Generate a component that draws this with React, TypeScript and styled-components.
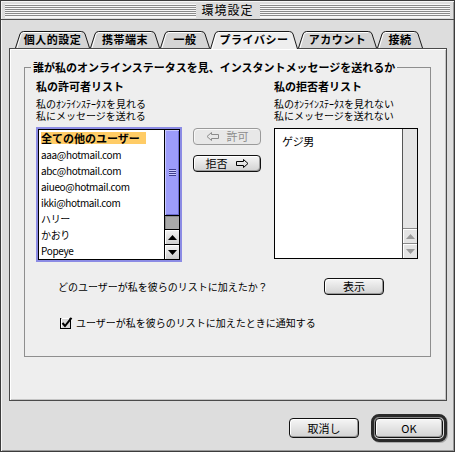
import React from 'react';
import styled, { createGlobalStyle } from 'styled-components';

const GlobalStyle = createGlobalStyle`
  html, body {
    margin: 0;
    padding: 0;
    background: #dddddd;
  }
  body {
    font-family: "Noto Sans CJK JP", "Noto Sans", sans-serif;
  }
`;

const Window = styled.div`
  width: 455px;
  height: 452px;
  box-sizing: border-box;
  border: 1px solid #3c3c3c;
  background: #dddddd;
  display: flex;
  flex-direction: column;
  color: #000;
  font-family: "Noto Sans CJK JP", "Noto Sans", sans-serif;
  box-shadow: inset 1px 1px 0 #f6f6f6, inset -1px -1px 0 #9a9a9a;
`;

const TitleBar = styled.div`
  flex: none;
  height: 19px;
  box-sizing: border-box;
  border-bottom: 1px solid #505050;
  display: flex;
  align-items: center;
  gap: 4px;
  padding: 0 4px 0 4px;
`;

const Stripes = styled.div`
  flex: 1;
  height: 13px;
  background: repeating-linear-gradient(to bottom, #f8f8f8 0 1px, #8a8a8a 1px 2px);
  box-shadow: 0 1px 0 #f8f8f8;
`;

const Title = styled.div`
  font-size: 12px;
  line-height: 18px;
  letter-spacing: 1px;
  padding: 0 2px;
`;

const Body = styled.div`
  flex: 1;
  display: flex;
  flex-direction: column;
  padding: 11px 0 0 8px;
`;

const TabRow = styled.div`
  position: relative;
  z-index: 1;
  display: flex;
  align-items: flex-start;
  height: 17px;
  padding-left: 6px;
`;

const TabBox = styled.div<{ $w: number; $h: number }>`
  position: relative;
  flex: none;
  width: ${(p) => p.$w}px;
  height: ${(p) => p.$h}px;
  display: flex;
  justify-content: center;
  svg {
    position: absolute;
    top: 0;
    left: 0;
  }
`;

const TabLabel = styled.span`
  position: relative;
  font-size: 11px;
  font-weight: bold;
  line-height: 17px;
  letter-spacing: 0.5px;
`;

const Panel = styled.div`
  width: 438px;
  height: 353px;
  box-sizing: border-box;
  border: 1px solid #4a4a4a;
  background: #eeeeee;
  box-shadow: inset 1px 1px 0 #ffffff, inset -1px -1px 0 #c4c4c4;
  padding: 11px 0 0 14px;
`;

const Group = styled.fieldset`
  margin: 0;
  padding: 0;
  min-width: 0;
  width: 407px;
  height: 297px;
  box-sizing: border-box;
  border: 1px solid #8e8e8e;
`;

const GroupLabel = styled.legend`
  margin-left: 6px;
  padding: 0 2px;
  font-size: 11px;
  font-weight: bold;
  line-height: 14px;
`;

const Columns = styled.div`
  display: grid;
  grid-template-columns: 157px 81px 144px;
  padding: 5px 0 0 11px;
`;

const ListHead = styled.div`
  display: flex;
  flex-direction: column;
`;

const Heading = styled.div`
  font-size: 11px;
  font-weight: bold;
  line-height: 14px;
`;

const Note = styled.div`
  margin-top: 5px;
  font-size: 10px;
  line-height: 12px;
  white-space: nowrap;
`;

const ListBox = styled.div<{ $focused?: boolean }>`
  display: flex;
  width: ${(p) => (p.$focused ? 142 : 144)}px;
  height: 131px;
  box-sizing: border-box;
  margin: ${(p) => (p.$focused ? '7px 0 0 2px' : '6px 0 0 0')};
  border: 1px solid #000;
  background: #ffffff;
  box-shadow: ${(p) => (p.$focused ? '0 0 0 2px #8b8be4' : 'none')};
`;

const Items = styled.div`
  flex: 1;
  padding: 1px 0 0 2px;
  overflow: hidden;
`;

const Item = styled.div`
  height: 16px;
  line-height: 16px;
  font-size: 10px;
  letter-spacing: -0.35px;
  white-space: nowrap;
`;

const Highlight = styled.span`
  display: inline-block;
  line-height: 12px;
  padding: 0 6px 0 0;
  background: #ffcc66;
  font-size: 11px;
  font-weight: bold;
  letter-spacing: 0;
`;

const ScrollBar = styled.div<{ $active?: boolean }>`
  flex: none;
  width: 15px;
  box-sizing: border-box;
  border-left: 1px solid ${(p) => (p.$active ? '#000' : '#555')};
  display: flex;
  flex-direction: column;
  background: ${(p) => (p.$active ? '#a9a9a9' : '#e4e4e4')};
`;

const Thumb = styled.div`
  height: 85px;
  border-bottom: 1px solid #000;
  background: #9c9cfa;
  box-shadow: inset 1px 1px 0 #c9c9ff, inset -1px -1px 0 #6a6ad0;
  display: flex;
  align-items: center;
  justify-content: center;
`;

const Grip = styled.div`
  width: 7px;
  height: 7px;
  background: repeating-linear-gradient(to bottom, #3b3b8c 0 1px, #c8c8ff 1px 2px);
`;

const Track = styled.div<{ $active?: boolean }>`
  flex: 1;
  box-shadow: ${(p) => (p.$active ? 'inset 1px 1px 0 #8a8a8a' : 'none')};
`;

const ArrowBox = styled.div<{ $active?: boolean }>`
  flex: none;
  height: 15px;
  box-sizing: border-box;
  border-top: 1px solid ${(p) => (p.$active ? '#000' : '#8a8a8a')};
  background: ${(p) => (p.$active ? 'linear-gradient(#f4f4f4, #cfcfcf)' : '#e4e4e4')};
  box-shadow: inset 1px 1px 0 #fff;
  display: flex;
  align-items: center;
  justify-content: center;
  color: ${(p) => (p.$active ? '#000' : '#9a9a9a')};
`;

const Middle = styled.div`
  display: flex;
  flex-direction: column;
  gap: 10px;
  padding-top: 6px;
`;

const PushButton = styled.button<{ $w: number; $h: number; $disabled?: boolean }>`
  width: ${(p) => p.$w}px;
  height: ${(p) => p.$h}px;
  box-sizing: border-box;
  padding: 0;
  border: 1px solid ${(p) => (p.$disabled ? '#9a9a9a' : '#111')};
  border-radius: 4px;
  background: ${(p) => (p.$disabled ? '#e8e8e8' : 'linear-gradient(#f6f6f6, #d2d2d2)')};
  box-shadow: ${(p) =>
    p.$disabled
      ? 'inset 1px 1px 0 #f8f8f8'
      : 'inset 1px 1px 0 #fff, inset -1px -1px 0 #9a9a9a'};
  color: ${(p) => (p.$disabled ? '#8c8c8c' : '#000')};
  font-family: "Noto Sans CJK JP", "Noto Sans", sans-serif;
  font-size: 11px;
  line-height: 1;
  display: flex;
  align-items: center;
  justify-content: center;
  gap: 8px;
`;

const DefaultRing = styled.div`
  padding: 1px;
  border: 3px solid #2a2a2a;
  border-radius: 8px;
  box-shadow: inset 1px 1px 0 #888, 1px 1px 0 #aaa;
  display: flex;
`;

const AskRow = styled.div`
  display: flex;
  align-items: center;
  justify-content: space-between;
  width: 326px;
  margin: 18px 0 0 33px;
  font-size: 10px;
  line-height: 17px;
`;

const CheckRow = styled.label`
  display: flex;
  align-items: center;
  gap: 3px;
  margin: 22px 0 0 35px;
  font-size: 10px;
  line-height: 12px;
`;

const Footer = styled.div`
  width: 438px;
  display: flex;
  justify-content: flex-end;
  align-items: center;
  gap: 12px;
  margin-top: 13px;
`;

const tabs = [
  { label: '個人的設定', w: 75 },
  { label: '携帯端末', w: 70 },
  { label: '一般', w: 50 },
  { label: 'プライバシー', w: 88, active: true },
  { label: 'アカウント', w: 79 },
  { label: '接続', w: 46 },
];

const allowed = [
  'aaa@hotmail.com',
  'abc@hotmail.com',
  'aiueo@hotmail.com',
  'ikki@hotmail.com',
  'ハリー',
  'かおり',
  'Popeye',
];

const Tab: React.FC<{ label: string; w: number; active?: boolean }> = ({ label, w, active }) => {
  const h = active ? 18 : 17;
  const edge = `M0.5,${h} L5,3 Q6,0.5 8.5,0.5 L${w - 8.5},0.5 Q${w - 6},0.5 ${w - 5},3 L${w - 0.5},${h}`;
  return (
    <TabBox $w={w} $h={h}>
      <svg width={w} height={h}>
        <path d={edge + ' Z'} fill={active ? '#eeeeee' : '#d5d5d5'} />
        <path d={`M2,${h} L6,3.5 Q7,1.5 9,1.5 L${w - 9},1.5`} fill="none" stroke="#fff" />
        <path d={edge} fill="none" stroke="#1a1a1a" />
      </svg>
      <TabLabel>{label}</TabLabel>
    </TabBox>
  );
};

const ArrowIcon: React.FC<{ dir: 'left' | 'right' }> = ({ dir }) => (
  <svg width="13" height="9" viewBox="0 0 13 9">
    <path
      d={
        dir === 'left'
          ? 'M1,4.5 L5.5,0.5 L5.5,2.5 L12.5,2.5 L12.5,6.5 L5.5,6.5 L5.5,8.5 Z'
          : 'M12,4.5 L7.5,0.5 L7.5,2.5 L0.5,2.5 L0.5,6.5 L7.5,6.5 L7.5,8.5 Z'
      }
      fill="none"
      stroke="currentColor"
      strokeLinejoin="miter"
    />
  </svg>
);

const Tri: React.FC<{ up?: boolean }> = ({ up }) => (
  <svg width="9" height="5" viewBox="0 0 9 5">
    <path d={up ? 'M0,5 L4.5,0 L9,5 Z' : 'M0,0 L9,0 L4.5,5 Z'} fill="currentColor" />
  </svg>
);

const CheckBox: React.FC = () => (
  <svg width="13" height="12" viewBox="0 0 13 12">
    <rect x="0.5" y="1.5" width="10" height="10" fill="#d8d8d8" stroke="#000" />
    <path d="M1.5,1.5 L9.5,1.5 M1.5,1.5 L1.5,10.5" stroke="#fff" />
    <path d="M2.5,6 L5,9 L11.5,0.8" fill="none" stroke="#000" strokeWidth="2" />
  </svg>
);

const App: React.FC = () => {
  return (
    <>
      <GlobalStyle />
      <Window>
        <TitleBar>
          <Stripes />
          <Title>環境設定</Title>
          <Stripes />
        </TitleBar>
        <Body>
          <TabRow>
            {tabs.map((t) => (
              <Tab key={t.label} label={t.label} w={t.w} active={t.active} />
            ))}
          </TabRow>
          <Panel>
            <Group>
              <GroupLabel>誰が私のオンラインステータスを見、インスタントメッセージを送れるか</GroupLabel>
              <Columns>
                <ListHead>
                  <Heading>私の許可者リスト</Heading>
                  <Note>
                    私のｵﾝﾗｲﾝｽﾃｰﾀｽを見れる
                    <br />
                    私にメッセージを送れる
                  </Note>
                </ListHead>
                <div />
                <ListHead>
                  <Heading>私の拒否者リスト</Heading>
                  <Note>
                    私のｵﾝﾗｲﾝｽﾃｰﾀｽを見れない
                    <br />
                    私にメッセージを送れない
                  </Note>
                </ListHead>

                <ListBox $focused>
                  <Items>
                    <Item>
                      <Highlight>全ての他のユーザー</Highlight>
                    </Item>
                    {allowed.map((name) => (
                      <Item key={name}>{name}</Item>
                    ))}
                  </Items>
                  <ScrollBar $active>
                    <Thumb>
                      <Grip />
                    </Thumb>
                    <Track $active />
                    <ArrowBox $active>
                      <Tri up />
                    </ArrowBox>
                    <ArrowBox $active>
                      <Tri />
                    </ArrowBox>
                  </ScrollBar>
                </ListBox>
                <Middle>
                  <PushButton $w={68} $h={17} $disabled>
                    <ArrowIcon dir="left" />
                    許可
                  </PushButton>
                  <PushButton $w={68} $h={17}>
                    拒否
                    <ArrowIcon dir="right" />
                  </PushButton>
                </Middle>
                <ListBox>
                  <Items>
                    <Item style={{ paddingLeft: 5, paddingTop: 3, fontSize: 11 }}>ゲジ男</Item>
                  </Items>
                  <ScrollBar>
                    <Track />
                    <ArrowBox>
                      <Tri up />
                    </ArrowBox>
                    <ArrowBox>
                      <Tri />
                    </ArrowBox>
                  </ScrollBar>
                </ListBox>
              </Columns>
              <AskRow>
                <span>どのユーザーが私を彼らのリストに加えたか？</span>
                <PushButton $w={60} $h={17}>表示</PushButton>
              </AskRow>
              <CheckRow>
                <CheckBox />
                ユーザーが私を彼らのリストに加えたときに通知する
              </CheckRow>
            </Group>
          </Panel>
          <Footer>
            <PushButton $w={70} $h={20}>取消し</PushButton>
            <DefaultRing>
              <PushButton $w={68} $h={20}>OK</PushButton>
            </DefaultRing>
          </Footer>
        </Body>
      </Window>
    </>
  );
};

export default App;
